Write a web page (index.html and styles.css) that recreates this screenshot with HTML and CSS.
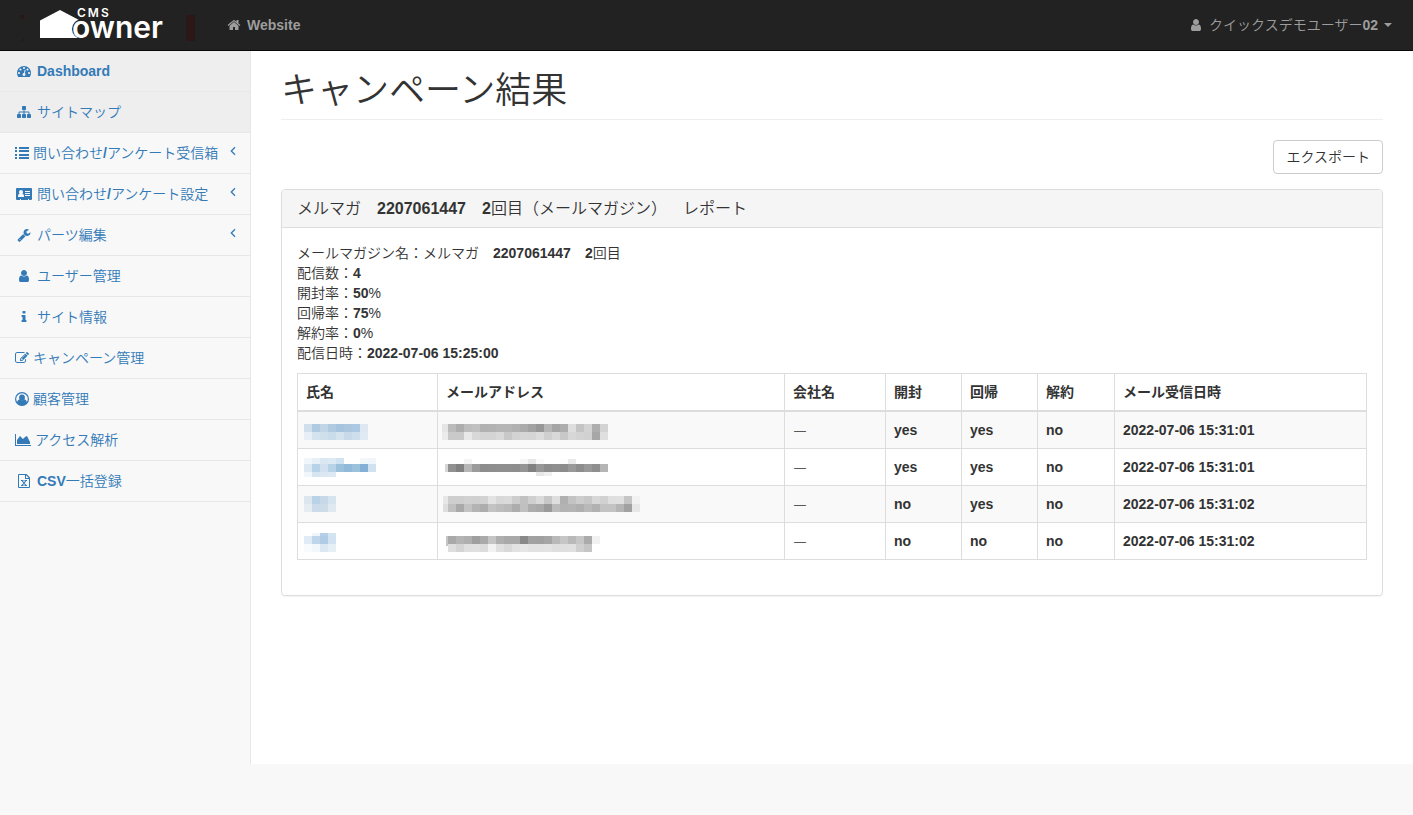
FILE: index.html
```html
<!DOCTYPE html>
<html lang="ja">
<head>
<meta charset="utf-8">
<title>キャンペーン結果</title>
<meta name="viewport" content="width=device-width, initial-scale=1">
<link rel="stylesheet" href="styles.css">
</head>
<body>
<svg class="sprite" aria-hidden="true">
  <symbol id="i-home" viewBox="0 0 1792 1792"><path d="M1472 992v480q0 26-19 45t-45 19h-384v-384h-256v384h-384q-26 0-45-19t-19-45v-480q0-1 .5-3t.5-3l575-474 575 474q1 2 1 6zm223-69l-62 74q-8 9-21 11h-3q-13 0-21-7l-692-577-692 577q-12 8-24 7-13-2-21-11l-62-74q-8-10-7-23.5t11-21.5l719-599q32-26 76-26t76 26l244 204v-195q0-14 9-23t23-9h192q14 0 23 9t9 23v408l219 182q10 8 11 21.5t-7 23.5z"/></symbol>
  <symbol id="i-user" viewBox="0 0 1792 1792"><path d="M1536 1399q0 109-62.5 187t-150.5 78h-854q-88 0-150.5-78t-62.5-187q0-85 8.5-160.5t31.5-152 58.5-131 94-89 134.5-34.5q131 128 313 128t313-128q76 0 134.5 34.5t94 89 58.5 131 31.5 152 8.5 160.5zm-256-887q0 159-112.5 271.5t-271.5 112.5-271.5-112.5-112.5-271.5 112.5-271.5 271.5-112.5 271.5 112.5 112.5 271.5z"/></symbol>
  <symbol id="i-dash" viewBox="0 0 1792 1792"><path d="M384 1152q0-53-37.5-90.5t-90.5-37.5-90.5 37.5-37.5 90.5 37.5 90.5 90.5 37.5 90.5-37.5 37.5-90.5zm192-448q0-53-37.5-90.5t-90.5-37.5-90.5 37.5-37.5 90.5 37.5 90.5 90.5 37.5 90.5-37.5 37.5-90.5zm428 481l101-382q6-26-7.5-48.5t-38.5-29.5-48 6.5-30 39.5l-101 382q-60 5-107 43.5t-63 98.5q-20 77 20 146t117 89 146-20 89-117q16-60-6-117t-72-91zm660-33q0-53-37.5-90.5t-90.5-37.5-90.5 37.5-37.5 90.5 37.5 90.5 90.5 37.5 90.5-37.5 37.5-90.5zm-640-640q0-53-37.5-90.5t-90.5-37.5-90.5 37.5-37.5 90.5 37.5 90.5 90.5 37.5 90.5-37.5 37.5-90.5zm448 192q0-53-37.5-90.5t-90.5-37.5-90.5 37.5-37.5 90.5 37.5 90.5 90.5 37.5 90.5-37.5 37.5-90.5zm320 448q0 261-141 483-19 29-54 29h-1402q-35 0-54-29-141-221-141-483 0-182 71-348t191-286 286-191 348-71 348 71 286 191 191 286 71 348z"/></symbol>
  <symbol id="i-sitemap" viewBox="0 0 1792 1792"><path d="M1792 1248v320q0 40-28 68t-68 28h-320q-40 0-68-28t-28-68v-320q0-40 28-68t68-28h96v-192h-512v192h96q40 0 68 28t28 68v320q0 40-28 68t-68 28h-320q-40 0-68-28t-28-68v-320q0-40 28-68t68-28h96v-192h-512v192h96q40 0 68 28t28 68v320q0 40-28 68t-68 28h-320q-40 0-68-28t-28-68v-320q0-40 28-68t68-28h96v-192q0-52 38-90t90-38h512v-192h-96q-40 0-68-28t-28-68v-320q0-40 28-68t68-28h320q40 0 68 28t28 68v320q0 40-28 68t-68 28h-96v192h512q52 0 90 38t38 90v192h96q40 0 68 28t28 68z"/></symbol>
  <symbol id="i-list" viewBox="0 0 14 14"><path d="M0 1h2v2H0zM4 1h10v2H4zM0 4h2v2H0zM4 4h10v2H4zM0 8h2v2H0zM4 8h10v2H4zM0 11h2v2H0zM4 11h10v2H4z"/></symbol>
  <symbol id="i-card" viewBox="0 0 16 14"><path fill-rule="evenodd" d="M1 1h14q1 0 1 1v10q0 1-1 1h-2v-1h-1v1H5v-1H4v1H1q-1 0-1-1V2q0-1 1-1zM2 10h6V9q0-2-1.500-2.200Q7 6 7 5q0-2-2-2T3 5q0 1 .5 1.800Q2 7 2 9zM9 4v1h5V4zM9 6v1h5V6zM9 8v1h5V8z"/></symbol>
  <symbol id="i-wrench" viewBox="0 0 1792 1792"><path d="M448 1472q0-26-19-45t-45-19-45 19-19 45 19 45 45 19 45-19 19-45zm644-420l-682 682q-37 37-90 37-52 0-91-37l-106-108q-38-36-38-90 0-53 38-91l681-681q39 98 114.500 173.500t173.500 114.500zm634-435q0 39-23 106-47 134-164.500 217.500t-258.500 83.500q-185 0-316.500-131.500t-131.500-316.500 131.500-316.500 316.500-131.500q58 0 121.500 16.500t107.500 46.500q16 11 16 28t-16 28l-293 169v224l193 107q5-3 79-48.500t135.500-81 70.500-35.500q15 0 23.500 10t8.500 25z"/></symbol>
  <symbol id="i-info" viewBox="0 0 1792 1792"><path d="M1216 1344v128q0 26-19 45t-45 19h-512q-26 0-45-19t-19-45v-128q0-26 19-45t45-19h64v-384h-64q-26 0-45-19t-19-45v-128q0-26 19-45t45-19h384q26 0 45 19t19 45v576h64q26 0 45 19t19 45zm-128-1152v192q0 26-19 45t-45 19h-256q-26 0-45-19t-19-45v-192q0-26 19-45t45-19h256q26 0 45 19t19 45z"/></symbol>
  <symbol id="i-edit" viewBox="0 0 1792 1792"><path d="M888 1184l116-116-152-152-116 116v56h96v96h56zm440-720q-16-16-33 1l-350 350q-17 17-1 33t33-1l350-350q17-17 1-33zm80 594v190q0 119-84.500 203.500t-203.500 84.500h-832q-119 0-203.500-84.500t-84.500-203.500v-832q0-119 84.500-203.500t203.500-84.500h832q63 0 117 25 15 7 18 23 3 17-9 29l-49 49q-14 14-32 8-23-6-45-6h-832q-66 0-113 47t-47 113v832q0 66 47 113t113 47h832q66 0 113-47t47-113v-126q0-13 9-22l64-64q15-15 35-7t20 29zm-96-738l288 288-672 672h-288v-288zm444 132l-92 92-288-288 92-92q28-28 68-28t68 28l152 152q28 28 28 68t-28 68z"/></symbol>
  <symbol id="i-circle" viewBox="0 0 14 14"><circle cx="7" cy="7" r="6.400" fill="none" stroke="currentColor" stroke-width="1.200"/><circle cx="7" cy="5.500" r="2.900"/><path d="M2 11q.3-3.300 2.600-3.700Q7 9.300 9.400 7.300 11.700 7.700 12 11 10 13.500 7 13.500T2 11z"/></symbol>
  <symbol id="i-area" viewBox="0 0 16 14"><path d="M0 1h1v11h15v1H0zM2 11V7l3-4 3 3 2-2 2-1 3 6v2z"/></symbol>
  <symbol id="i-excel" viewBox="0 0 12 14"><path fill-rule="evenodd" d="M1 0h7.500L12 3.500V13q0 1-1 1H1q-1 0-1-1V1q0-1 1-1zM1 1v12h10V5H7V1zM8 1.300V4h2.700z"/><path d="M3 6h2.500v1H5l1 1.400L7 7h-.5V6H9v1h-.7L6.600 9.200 8.400 11H9v1H6.500v-1H7L6 9.900 5 11h.5v1H3v-1h.6l1.800-1.800L3.700 7H3z"/></symbol>
  <symbol id="i-angle" viewBox="0 0 8 10"><path d="M6 1.300L2.300 5 6 8.700" fill="none" stroke="currentColor" stroke-width="1.300"/></symbol>
</svg>

<header class="navbar">
  <a class="brand" href="#" aria-label="CMS owner">
    <svg class="logo" viewBox="0 0 180 40" aria-hidden="true">
      <path class="logo-edge" d="M4 10h5v4H7zM6 36h3v-3z"/>
      <path class="logo-edge" d="M171 10h9v26h-9z"/>
      <path class="logo-house" d="M25 15.500L45 5l20 10.500V33H25z"/>
      <circle class="logo-gap" cx="67" cy="24" r="10"/>
      <text class="logo-owner" x="57" y="33">owner</text>
      <text class="logo-cms" x="62" y="12">CMS</text>
    </svg>
  </a>
  <a class="nav-link" href="#"><svg class="icon fw"><use href="#i-home"/></svg><b>Website</b></a>
  <button class="nav-link user" type="button"><svg class="icon fw"><use href="#i-user"/></svg><span>クイックスデモユーザー<b>02</b></span><i class="caret"></i></button>
</header>

<div class="layout">
  <nav class="sidebar">
    <ul>
      <li><a class="on" href="#"><svg class="icon fw"><use href="#i-dash"/></svg><b>Dashboard</b></a></li>
      <li><a class="on" href="#"><svg class="icon fw"><use href="#i-sitemap"/></svg><span>サイトマップ</span></a></li>
      <li><a href="#"><svg class="icon"><use href="#i-list"/></svg><span>問い合わせ<b>/</b>アンケート受信箱</span><svg class="arrow"><use href="#i-angle"/></svg></a></li>
      <li><a href="#"><svg class="icon fw"><use href="#i-card"/></svg><span>問い合わせ<b>/</b>アンケート設定</span><svg class="arrow"><use href="#i-angle"/></svg></a></li>
      <li><a href="#"><svg class="icon fw"><use href="#i-wrench"/></svg><span>パーツ編集</span><svg class="arrow"><use href="#i-angle"/></svg></a></li>
      <li><a href="#"><svg class="icon fw"><use href="#i-user"/></svg><span>ユーザー管理</span></a></li>
      <li><a href="#"><svg class="icon fw"><use href="#i-info"/></svg><span>サイト情報</span></a></li>
      <li><a href="#"><svg class="icon"><use href="#i-edit"/></svg><span>キャンペーン管理</span></a></li>
      <li><a href="#"><svg class="icon"><use href="#i-circle"/></svg><span>顧客管理</span></a></li>
      <li><a href="#"><svg class="icon wide"><use href="#i-area"/></svg><span>アクセス解析</span></a></li>
      <li><a href="#"><svg class="icon fw"><use href="#i-excel"/></svg><span><b>CSV</b>一括登録</span></a></li>
    </ul>
  </nav>

  <main class="page">
    <h1>キャンペーン結果</h1>
    <div class="actions"><button class="btn" type="button">エクスポート</button></div>

    <section class="panel">
      <h2 class="panel-heading">メルマガ　<b>2207061447</b>　<b>2</b>回目（メールマガジン）　レポート</h2>
      <div class="panel-body">
        <div>メールマガジン名：メルマガ　<b>2207061447</b>　<b>2</b>回目</div>
        <div>配信数：<b>4</b></div>
        <div>開封率：<b>50</b>%</div>
        <div>回帰率：<b>75</b>%</div>
        <div>解約率：<b>0</b>%</div>
        <div>配信日時：<b>2022-07-06 15:25:00</b></div>
        <table>
          <colgroup><col class="c-name"><col class="c-mail"><col class="c-org"><col class="c-flag"><col class="c-flag"><col class="c-last"><col></colgroup>
          <thead>
            <tr><th>氏名</th><th>メールアドレス</th><th>会社名</th><th>開封</th><th>回帰</th><th>解約</th><th>メール受信日時</th></tr>
          </thead>
          <tbody>
            <tr><td><a href="#" aria-label="氏名"><svg class="mosaic" data-key="n1"></svg></a></td><td><svg class="mosaic" data-key="m1"></svg></td><td class="none">―</td><td><b>yes</b></td><td><b>yes</b></td><td><b>no</b></td><td><b>2022-07-06 15:31:01</b></td></tr>
            <tr><td><a href="#" aria-label="氏名"><svg class="mosaic" data-key="n2"></svg></a></td><td><svg class="mosaic" data-key="m2"></svg></td><td class="none">―</td><td><b>yes</b></td><td><b>yes</b></td><td><b>no</b></td><td><b>2022-07-06 15:31:01</b></td></tr>
            <tr><td><a href="#" aria-label="氏名"><svg class="mosaic" data-key="n3"></svg></a></td><td><svg class="mosaic" data-key="m3"></svg></td><td class="none">―</td><td><b>no</b></td><td><b>yes</b></td><td><b>no</b></td><td><b>2022-07-06 15:31:02</b></td></tr>
            <tr><td><a href="#" aria-label="氏名"><svg class="mosaic" data-key="n4"></svg></a></td><td><svg class="mosaic" data-key="m4"></svg></td><td class="none">―</td><td><b>no</b></td><td><b>no</b></td><td><b>no</b></td><td><b>2022-07-06 15:31:02</b></td></tr>
          </tbody>
        </table>
      </div>
    </section>
  </main>
</div>
<script src="mosaic.js"></script>
</body>
</html>
```
FILE: styles.css
```css
* { box-sizing: border-box; }

body {
  margin: 0;
  background: #f8f8f8;
  color: #333;
  font: 350 14px/20px "Liberation Sans", "Noto Sans CJK JP", sans-serif;
  text-spacing-trim: space-all;
}

b { font-weight: 700; }
a { color: #337ab7; text-decoration: none; }
button { font: inherit; cursor: pointer; }
.sprite { position: absolute; width: 0; height: 0; }

.icon { flex: none; width: 14px; height: 14px; fill: currentColor; }
.icon.fw { width: 18px; }
.icon.wide { width: 16px; }

/* top bar */
.navbar {
  display: flex;
  align-items: center;
  height: 51px;
  padding-left: 15px;
  background: #222;
  border-bottom: 1px solid #080808;
}
.brand { display: block; margin-right: 15px; }
.logo { display: block; width: 180px; height: 40px; }
.logo-edge { fill: #2b1716; }
.logo-house { fill: #fff; }
.logo-gap { fill: #222; }
.logo-owner, .logo-cms { fill: #fff; font-family: Inter, sans-serif; font-weight: 600; }
.logo-owner { font-size: 30px; }
.logo-cms { font-size: 12px; letter-spacing: 2px; }
.nav-link {
  display: flex;
  align-items: center;
  gap: 4px;
  padding: 15px;
  border: 0;
  background: none;
  color: #9d9d9d;
}
.user { margin-left: auto; margin-right: 6px; }
.caret {
  margin-left: 2px;
  border: 4px solid transparent;
  border-top-color: currentColor;
  border-bottom: 0;
}

/* side menu */
.layout { display: flex; align-items: flex-start; }
.sidebar { flex: none; width: 250px; }
.sidebar ul { margin: 0; padding: 0; list-style: none; }
.sidebar li { border-bottom: 1px solid #e7e7e7; }
.sidebar a {
  display: flex;
  align-items: center;
  gap: 4px;
  padding: 10px 13px 10px 15px;
  white-space: nowrap;
}
.sidebar .on { background: #eee; }
.arrow { width: 8px; height: 10px; margin: 0 0 4px auto; }

/* content */
.page {
  flex: 1;
  min-width: 0;
  min-height: calc(100vh - 102px);
  padding: 20px 30px 0;
  background: #fff;
  border-left: 1px solid #e7e7e7;
}
h1 {
  margin: 0 0 20px;
  padding-bottom: 8px;
  border-bottom: 1px solid #eee;
  font-size: 36px;
  font-weight: 350;
  line-height: 40px;
}
.actions { display: flex; justify-content: flex-end; margin-bottom: 15px; }
.btn {
  padding: 6px 12px;
  border: 1px solid #ccc;
  border-radius: 4px;
  background: #fff;
  color: #333;
}
.panel {
  border: 1px solid #ddd;
  border-radius: 4px;
  box-shadow: 0 1px 1px rgba(0, 0, 0, .05);
}
.panel-heading {
  margin: 0;
  padding: 10px 15px;
  border-bottom: 1px solid #ddd;
  border-radius: 3px 3px 0 0;
  background: #f5f5f5;
  font-size: 16px;
  font-weight: 350;
  line-height: 17px;
}
.panel-body { padding: 15px; }

table {
  width: 100%;
  margin: 10px 0 20px;
  border-collapse: collapse;
  table-layout: fixed;
}
.c-name { width: 140px; }
.c-mail { width: 347px; }
.c-org { width: 101px; }
.c-flag { width: 76px; }
.c-last { width: 77px; }
th, td { padding: 8px; border: 1px solid #ddd; text-align: left; }
th { border-bottom-width: 2px; font-weight: 700; }
.none { font-family: "Noto Sans CJK JP", sans-serif; font-weight: 500; }
tbody tr:nth-child(odd) { background: #f9f9f9; }
.mosaic { display: block; width: 210px; height: 20px; margin: 0 -4px; overflow: visible; }
td a .mosaic { width: 100px; }
```
FILE: mosaic.js
```js
// Masked values: each strip is [x, y, height, colours of 8px cells]; "-" leaves a cell empty.
const strips = {
  n1: [[2, 4, 8, 'cfdfeb b0cae2 c1d5e7 b0cae2 a6c4de abc7e0 adc8e2 dfe8f2'],
       [2, 12, 8, 'e7eef5 d3e3ef d0dfec c9dcea d5e3ef c8daea cfdeec e0eaf2']],
  n2: [[2, 1, 6, 'f1f6fa e7f0f7 d8e7f2 dde9f3 d1e3f1 - - f2f7fa eff5fa'],
       [2, 7, 8, 'dce9f3 b8d2e8 d1e1f0 b8d2e8 9cc1dc 91b9d9 9cc1dc 84b0d5 d0e1ef'],
       [2, 15, 5, 'f1f6fa d5e5f1 dbe8f3 ddeaf4']],
  n3: [[2, 2, 8, 'dbe6ee b9d2e6 c7d9e8 d6e4ef'],
       [2, 10, 8, 'e5ecf2 cbdbe9 ccdce9 e0e9f0']],
  n4: [[10, 2, 3, 'f0f5fa b5d0e6 d5e4f1'],
       [2, 5, 8, 'e0ecf5 bfd6ea b0cce5 d2e2f0'],
       [2, 13, 8, 'f7fbfd f1f7fa dbe8f3 e6eff6']],
  m1: [[0, 4, 8, 'e5e5e5'],
       [6, 4, 8, 'bbb adadad bdbdbd c0c0c0 b1b1b1 b2b2b2 b5b5b5 b5b5b5 b1b1b1 ababab a2a2a2 979797 b6b6b6 a5a5a5 adadad dedede c4c4c4 d3d3d3 aeaeae d3d3d3'],
       [0, 12, 8, 'ebebeb'],
       [6, 12, 8, 'c9c9c9 c9c9c9 e8e8e8 d8d8d8 d4d4d4 d4d4d4 d9d9d9 c8c8c8 d3d3d3 d6d6d6 d5d5d5 dcdcdc cfcfcf d8d8d8 c8c8c8 d7d7d7 d3d3d3 d1d1d1 a7a7a7 dfdfdf']],
  m2: [[22, 2, 5, 'f4f4f4 - - - - - - f5f5f5 e7e7e7 fafafa - - fdfdfd eaeaea'],
       [3, 7, 8, 'd7d7d7'],
       [6, 7, 8, '919191 818181 b6b6b6 9b9b9b 8d8d8d 8e8e8e 8f8f8f 8f8f8f 8e8e8e 949494 818181 979797 8c8c8c 8f8f8f 8c8c8c 999 8d8d8d 999 8f8f8f b5b5b5'],
       [94, 15, 4, 'e7e7e7 f0f0f0']],
  m3: [[1, 2, 8, 'e7e7e7'],
       [6, 2, 8, 'cecece cecece d1d1d1 d0d0d0 d2d2d2 e3e3e3 d8d8d8 dadada cdcdcd c1c1c1 cfcfcf dadada c7c7c7 dedede b0b0b0 c3c3c3 cdcdcd c7c7c7 d7d7d7 d1d1d1 dfdfdf e0e0e0 c5c5c5 f2f2f2'],
       [1, 10, 8, 'dedede'],
       [6, 10, 8, 'c0c0c0 a9a9a9 c3c3c3 b4b4b4 adadad c3c3c3 bdbdbd b9b9b9 adadad c0c0c0 adadad a9a9a9 9a9a9a bbb b3b3b3 b4b4b4 afafaf b9b9b9 b1b1b1 c3c3c3 c3c3c3 b5b5b5 a1a1a1 e7e7e7']],
  m4: [[4, 5, 10, 'c5c5c5'],
       [6, 5, 8, 'a9a9a9 b4b4b4 afafaf 9f9f9f aaa c5c5c5 afafaf a9a9a9 a9a9a9 898989 a1a1a1 a0a0a0 a5a5a5 b9b9b9 c6c6c6 b9b9b9 c6c6c6 ababab'],
       [150, 5, 8, 'f1f1f1'],
       [6, 13, 8, 'dedede d4d4d4 dfdfdf e0e0e0 dcdcdc f2f2f2 e0e0e0 d9d9d9 e2e2e2 e6e6e6 e2e2e2 e2e2e2 e3e3e3 dfdfdf dfdfdf e0e0e0 cfcfcf c5c5c5']]
};

document.querySelectorAll('.mosaic').forEach((svg) => {
  strips[svg.dataset.key].forEach(([x, y, height, cells]) => {
    cells.split(' ').forEach((colour, i) => {
      if (colour === '-') return;
      const rect = document.createElementNS('http://www.w3.org/2000/svg', 'rect');
      rect.setAttribute('x', x + i * 8);
      rect.setAttribute('y', y);
      rect.setAttribute('width', 8);
      rect.setAttribute('height', height);
      rect.setAttribute('fill', '#' + colour);
      svg.append(rect);
    });
  });
});
```
